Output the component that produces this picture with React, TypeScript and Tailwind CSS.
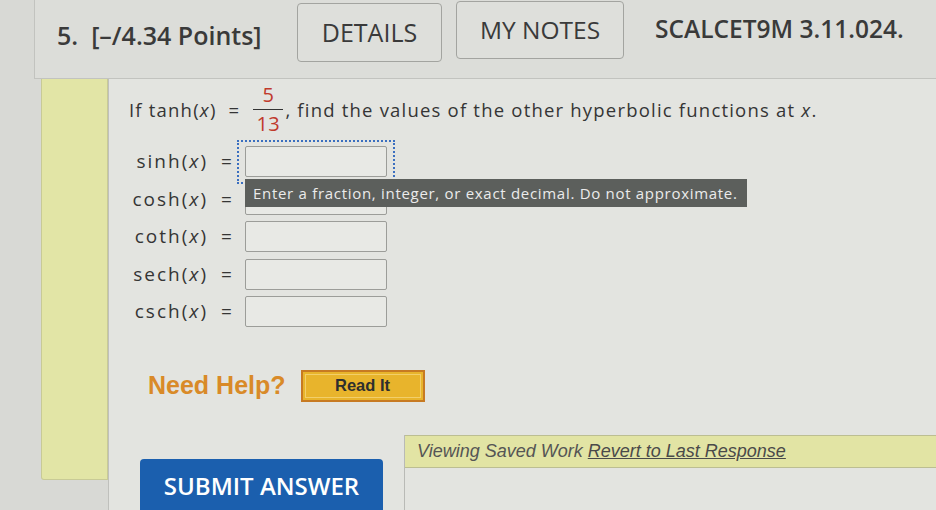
import React from "react";

const rows = ["sinh", "cosh", "coth", "sech", "csch"];

function Fn({ name }: { name: string }) {
  return (
    <span>
      {name}(<span className="italic">x</span>)
    </span>
  );
}

export default function App() {
  return (
    <div className="w-[936px] h-[510px] overflow-hidden bg-[#d8d9d5] text-[#353535]">
      {/* Header */}
      <div className="ml-[34px] h-[79px] border-l border-b border-[#c2c3bf] bg-[#dcddd9] flex items-start font-['Open_Sans',sans-serif]">
        <div className="pl-[22px] mt-[18px] text-[25px] font-semibold text-[#3a3a3a] w-[262px] leading-[34px] whitespace-nowrap">
          5.&nbsp; [–/4.34 Points]
        </div>
        <button className="mt-[3px] w-[145px] h-[59px] rounded-[4px] border-[1.5px] border-[#a3a4a0] bg-[#dedfdb] text-[25px] text-[#3a3a3a]">
          DETAILS
        </button>
        <button className="ml-[14px] mt-[1px] w-[168px] h-[58px] rounded-[4px] border-[1.5px] border-[#a3a4a0] bg-[#dedfdb] text-[24.5px] text-[#3a3a3a]">
          MY NOTES
        </button>
        <div className="ml-[31px] mt-[12px] text-[24.5px] font-semibold text-[#3a3a3a] leading-[34px] whitespace-nowrap">
          SCALCET9M 3.11.024.
        </div>
      </div>

      {/* Body */}
      <div className="flex h-[431px]">
        <div className="w-[41px] shrink-0" />
        <div className="w-[67px] h-[401px] shrink-0 bg-[#e2e5a6] border border-t-0 border-[#c8ca96] rounded-bl-[3px]" />
        <div className="flex-1 border-l border-[#bfc0bc] bg-[#e3e4e0] flex flex-col font-['Open_Sans',sans-serif]">
          {/* Question */}
          <div className="pl-5 pt-[6px] flex items-center text-[18.5px] tracking-[1.2px] h-[60px] whitespace-nowrap">
            <span>
              If tanh(<span className="italic">x</span>)&nbsp; =&nbsp;
            </span>
            <span className="inline-flex flex-col items-center mx-[7px] leading-none tracking-[0.5px]">
              <span className="text-[#c0392b] text-[20px] pb-[4px]">5</span>
              <span className="w-[30px] border-t-[1.5px] border-[#333]" />
              <span className="text-[#c0392b] text-[20px] pt-[4px]">13</span>
            </span>
            <span className="-ml-[5px]">, find the values of the other hyperbolic functions at <span className="italic">x</span>.</span>
          </div>

          {/* Inputs */}
          <div className="relative pl-5 pt-[12px] flex flex-col gap-[6.5px] text-[19px]">
            {rows.map((r, i) => (
              <div key={r} className="flex items-center h-[31px]">
                <span className="w-[79px] text-right whitespace-nowrap tracking-[2px]">
                  <Fn name={r} />
                </span>
                <span className="w-[37px] text-center">=</span>
                <span className="relative">
                  {i === 0 && (
                    <span className="absolute -left-[8px] -top-[6px] w-[158px] h-[44px] border-2 border-dotted border-[#3b6fc0]" />
                  )}
                  <span className="block w-[142px] h-[31px] border-[1.5px] border-[#9c9d99] bg-[#e8e9e5] rounded-[2px]" />
                </span>
              </div>
            ))}
            <div className="absolute left-[136px] top-[45px] w-[502px] h-[28px] bg-[#5c5f5c] text-[#ebebeb] text-[15px] tracking-[0.7px] flex items-center pl-[8px] whitespace-nowrap">
              Enter a fraction, integer, or exact decimal. Do not approximate.
            </div>
          </div>

          {/* Need help */}
          <div className="pl-[39px] mt-[40px] flex items-center font-['Liberation_Sans',sans-serif]">
            <span className="text-[25px] font-bold text-[#d98a28]">Need Help?</span>
            <button className="ml-[15px] w-[124px] h-[32px] border-2 border-[#c77a22] bg-[#e8b42c] p-[2px]">
              <span className="flex items-center justify-center h-full border border-[#f2cf6a] text-[16.5px] font-bold text-[#2e2e2e]">
                Read It
              </span>
            </button>
          </div>

          {/* Bottom */}
          <div className="flex items-start mt-[30px] flex-1">
            <div className="pl-[31px] pt-[24px]">
              <button className="w-[243px] h-[60px] rounded-t-[4px] bg-[#1b5fae] text-white text-[24px] font-semibold font-['Open_Sans',sans-serif] pb-[6px]">
                SUBMIT ANSWER
              </button>
            </div>
            <div className="ml-[21px] flex-1 self-stretch border-l border-[#b9bab6] flex flex-col">
              <div className="h-[33px] bg-[#e2e4a4] border-y border-[#bcbe92] flex items-center pl-[12px] italic text-[18px] text-[#555] font-['Liberation_Sans',sans-serif] whitespace-nowrap">
                Viewing Saved Work&nbsp;<span className="underline text-[#4a4a4a]">Revert to Last Response</span>
              </div>
            </div>
          </div>
        </div>
      </div>
    </div>
  );
}
